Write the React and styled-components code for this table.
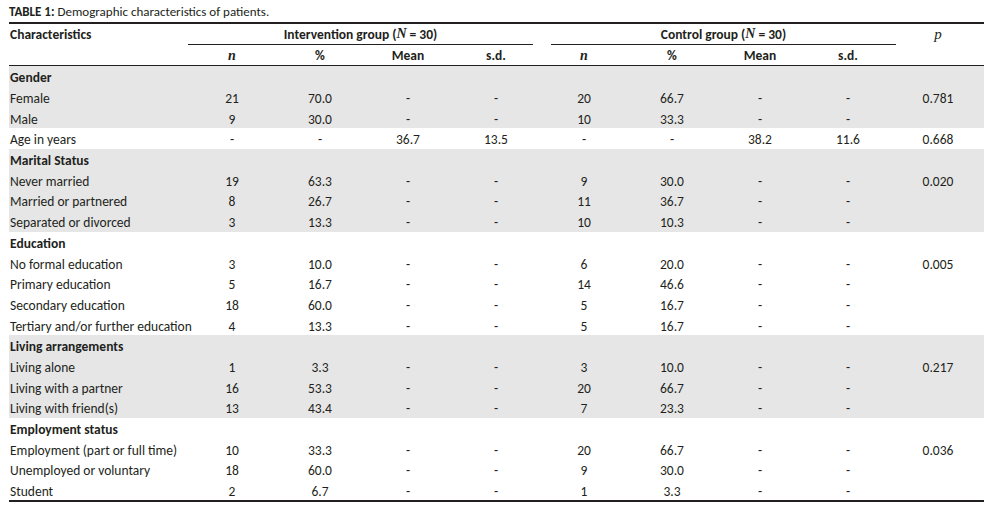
import React from "react";
import styled, { createGlobalStyle } from "styled-components";

const Global = createGlobalStyle`
  html, body { margin: 0; padding: 0; background: #fff; }
  body {
    font-family: Carlito, Calibri, Lato, "Open Sans", sans-serif;
    font-size: 13.5px;
    color: #231f20;
  }
`;

const COLS = "179px repeat(8, 88px) 92px";

const Page = styled.div`
  width: 975px;
  padding: 0 12px 0 9px;
`;

const Caption = styled.div`
  height: 21px;
  line-height: 21px;
  padding-top: 1px;
  font-size: 13px;
`;

const Strong = styled.span`
  font-weight: 700;
`;

const Table = styled.div`
  border-top: 2px solid #231f20;
  border-bottom: 2px solid #231f20;
`;

const Head = styled.div`
  border-bottom: 1px solid #231f20;
`;

const Row = styled.div`
  display: grid;
  grid-template-columns: ${COLS};
  height: ${(p) => p.$h || "20.7px"};
  align-items: center;
`;

const Cell = styled.div`
  text-align: ${(p) => (p.$left ? "left" : "center")};
  font-weight: ${(p) => (p.$bold ? 700 : 400)};
  padding-left: ${(p) => (p.$left ? "1px" : "0")};
  padding-top: ${(p) => (p.$body ? "3px" : "0")};
  white-space: nowrap;
`;

const GroupCell = styled.div`
  grid-column: span 4;
  align-self: stretch;
  display: flex;
  align-items: center;
  justify-content: center;
  font-weight: 700;
  border-bottom: 1px solid #231f20;
  margin: ${(p) => p.$margin};
`;

const Ital = styled.span`
  font-family: "Liberation Serif", "Times New Roman", serif;
  font-style: italic;
  font-weight: ${(p) => (p.$bold ? 700 : 400)};
  font-size: ${(p) => p.$size || "14px"};
`;

const Section = styled.div`
  background: ${(p) => (p.$shaded ? "#e6e6e6" : "#fff")};
`;

const sections = [
  {
    shaded: true,
    title: "Gender",
    rows: [
      ["Female", "21", "70.0", "-", "-", "20", "66.7", "-", "-", "0.781"],
      ["Male", "9", "30.0", "-", "-", "10", "33.3", "-", "-", ""],
    ],
  },
  {
    shaded: false,
    rows: [["Age in years", "-", "-", "36.7", "13.5", "-", "-", "38.2", "11.6", "0.668"]],
  },
  {
    shaded: true,
    title: "Marital Status",
    rows: [
      ["Never married", "19", "63.3", "-", "-", "9", "30.0", "-", "-", "0.020"],
      ["Married or partnered", "8", "26.7", "-", "-", "11", "36.7", "-", "-", ""],
      ["Separated or divorced", "3", "13.3", "-", "-", "10", "10.3", "-", "-", ""],
    ],
  },
  {
    shaded: false,
    title: "Education",
    rows: [
      ["No formal education", "3", "10.0", "-", "-", "6", "20.0", "-", "-", "0.005"],
      ["Primary education", "5", "16.7", "-", "-", "14", "46.6", "-", "-", ""],
      ["Secondary education", "18", "60.0", "-", "-", "5", "16.7", "-", "-", ""],
      ["Tertiary and/or further education", "4", "13.3", "-", "-", "5", "16.7", "-", "-", ""],
    ],
  },
  {
    shaded: true,
    title: "Living arrangements",
    rows: [
      ["Living alone", "1", "3.3", "-", "-", "3", "10.0", "-", "-", "0.217"],
      ["Living with a partner", "16", "53.3", "-", "-", "20", "66.7", "-", "-", ""],
      ["Living with friend(s)", "13", "43.4", "-", "-", "7", "23.3", "-", "-", ""],
    ],
  },
  {
    shaded: false,
    title: "Employment status",
    rows: [
      ["Employment (part or full time)", "10", "33.3", "-", "-", "20", "66.7", "-", "-", "0.036"],
      ["Unemployed or voluntary", "18", "60.0", "-", "-", "9", "30.0", "-", "-", ""],
      ["Student", "2", "6.7", "-", "-", "1", "3.3", "-", "-", ""],
    ],
  },
];

const subHeads = ["n", "%", "Mean", "s.d."];

export default function App() {
  return (
    <>
      <Global />
      <Page>
        <Caption>
          <Strong>TABLE 1:</Strong> Demographic characteristics of patients.
        </Caption>
        <Table>
          <Head>
            <Row $h="21px">
              <Cell $left $bold>Characteristics</Cell>
              <GroupCell $margin="0 7px 0 0">
                Intervention group (<Ital $bold>N</Ital>&nbsp;= 30)
              </GroupCell>
              <GroupCell $margin="0 -4px 0 11px">
                Control group (<Ital $bold>N</Ital>&nbsp;= 30)
              </GroupCell>
              <Cell><Ital $size="15px">p</Ital></Cell>
            </Row>
            <Row $h="20px">
              <Cell />
              {[...subHeads, ...subHeads].map((h, i) => (
                <Cell key={i} $bold>
                  {h === "n" ? <Ital $bold>n</Ital> : h}
                </Cell>
              ))}
              <Cell />
            </Row>
          </Head>
          {sections.map((s, si) => (
            <Section key={si} $shaded={s.shaded}>
              {s.title && (
                <Row>
                  <Cell $left $bold $body>{s.title}</Cell>
                </Row>
              )}
              {s.rows.map((r, ri) => (
                <Row key={ri}>
                  {r.map((v, ci) => (
                    <Cell key={ci} $body $left={ci === 0}>{v}</Cell>
                  ))}
                </Row>
              ))}
            </Section>
          ))}
        </Table>
      </Page>
    </>
  );
}
